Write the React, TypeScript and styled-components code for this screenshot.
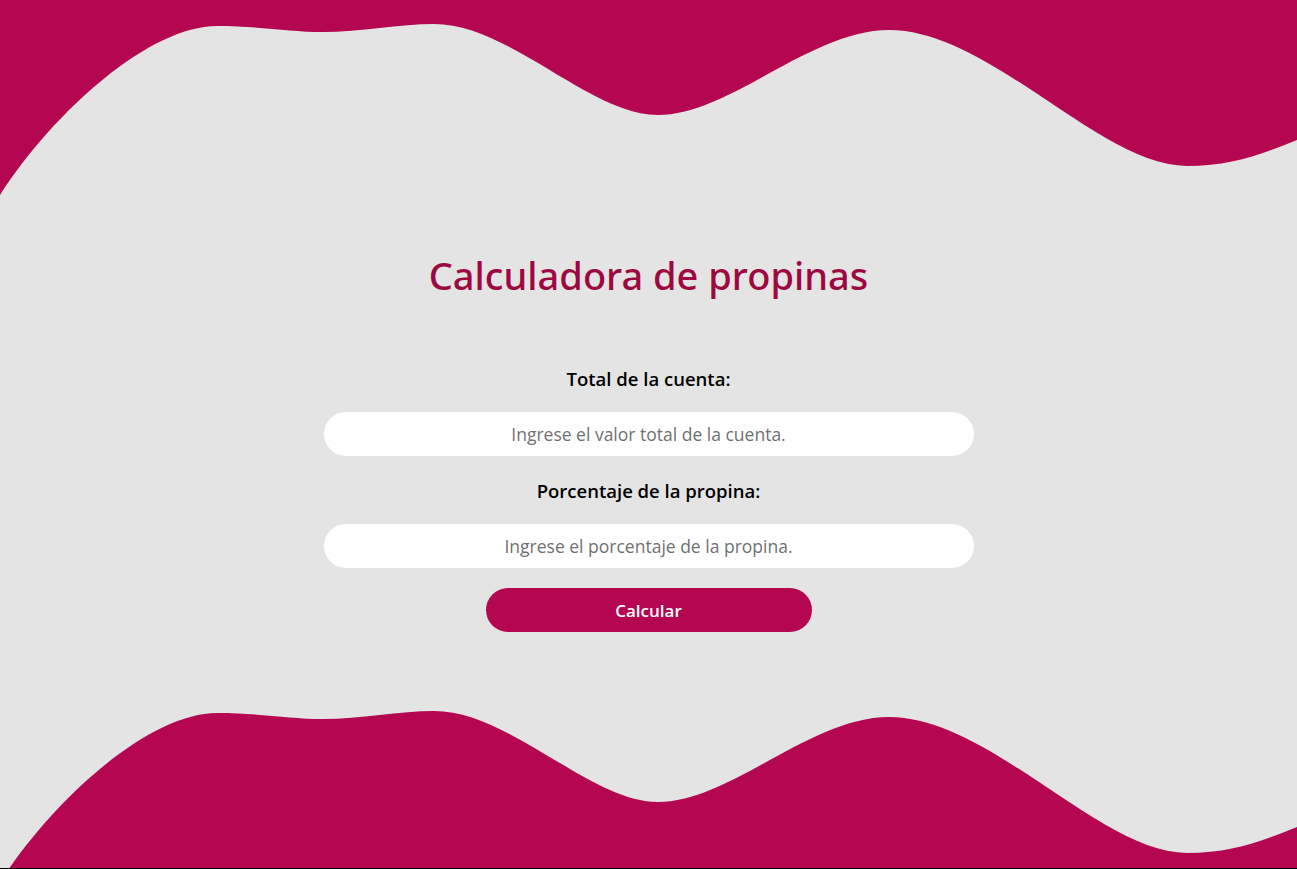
import React from "react";
import styled, { createGlobalStyle } from "styled-components";

const GlobalStyle = createGlobalStyle`
  html, body {
    margin: 0;
    padding: 0;
    background: #000;
  }
  body {
    font-family: "Open Sans", "Noto Sans", sans-serif;
  }
  * { box-sizing: border-box; }
`;

const MAGENTA = "#b50651";

const CURVE =
  "C55,110 150,26 217,26 C260,26 290,32 323,32 C360,32 400,24 434,24 C510,24 590,115 658,115 C730,115 810,30 889,30 C990,30 1100,166 1187,166 C1230,166 1260,155 1297,140";

const Page = styled.div`
  height: 868px;
  background: #e4e4e4;
  display: flex;
  flex-direction: column;
  overflow: hidden;
`;

const Wave = styled.svg<{ $h: number }>`
  display: block;
  width: 100%;
  height: ${(p) => p.$h}px;
  flex: none;
`;

const Main = styled.main`
  flex: 1;
  display: flex;
  flex-direction: column;
  align-items: center;
  padding-top: 49px;
`;

const Title = styled.h1`
  margin: 0 0 66px;
  font-family: "Noto Sans", "Open Sans", sans-serif;
  font-size: 38px;
  line-height: 52px;
  font-weight: 500;
  color: #9e0841;
`;

const Form = styled.form`
  display: flex;
  flex-direction: column;
  align-items: center;
  width: 650px;
`;

const Label = styled.label`
  font-size: 18.5px;
  line-height: 24px;
  font-weight: 600;
  color: #000;
  margin-bottom: 21px;
`;

const Input = styled.input<{ $last?: boolean }>`
  width: 100%;
  height: 44px;
  border: none;
  border-radius: 22px;
  background: #fff;
  text-align: center;
  font-family: inherit;
  font-size: 17.5px;
  color: #333;
  outline: none;
  margin-bottom: ${(p) => (p.$last ? 20 : 23)}px;
  &::placeholder {
    color: #707070;
  }
`;

const Button = styled.button`
  width: 326px;
  height: 44px;
  border: none;
  border-radius: 22px;
  background: ${MAGENTA};
  color: #fff;
  font-family: inherit;
  font-size: 17px;
  font-weight: 600;
  cursor: pointer;
`;

export default function App() {
  return (
    <>
      <GlobalStyle />
      <Page>
        <Wave $h={200} viewBox="0 0 1297 200" preserveAspectRatio="none">
          <path d={`M0,0 L0,195 ${CURVE} L1297,0 Z`} fill={MAGENTA} />
        </Wave>
        <Main>
          <Title>Calculadora de propinas</Title>
          <Form onSubmit={(e) => e.preventDefault()}>
            <Label htmlFor="total">Total de la cuenta:</Label>
            <Input id="total" placeholder="Ingrese el valor total de la cuenta." />
            <Label htmlFor="pct">Porcentaje de la propina:</Label>
            <Input id="pct" $last placeholder="Ingrese el porcentaje de la propina." />
            <Button type="submit">Calcular</Button>
          </Form>
        </Main>
        <Wave $h={178} viewBox="0 690 1297 178" preserveAspectRatio="none">
          <path
            transform="translate(0,687)"
            d={`M0,195 ${CURVE} L1297,400 L0,400 Z`}
            fill={MAGENTA}
          />
        </Wave>
      </Page>
    </>
  );
}
